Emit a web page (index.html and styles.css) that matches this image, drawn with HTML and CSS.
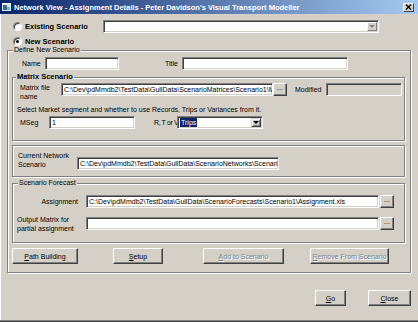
FILE: index.html
```html
<!DOCTYPE html>
<html>
<head>
  <title>Network View - Assignment Details</title>
  <link rel="stylesheet" href="styles.css">
</head>
<body>
  <div class="window">
    <div class="titlebar">
      <svg class="app-icon" width="9" height="8" viewBox="0 0 9 8">
        <rect x="0" y="0" width="9" height="8" fill="#dfe8ef"/>
        <rect x="1" y="2" width="4" height="5" fill="#2f6f8f"/>
        <rect x="5" y="4" width="3" height="3" fill="#7fb0c8"/>
        <rect x="0" y="0" width="9" height="1" fill="#ffffff"/>
      </svg>
      <span class="title">Network View - Assignment Details - Peter Davidson's Visual Transport Modeller</span>
      <span class="close-btn">
        <svg width="7" height="6" viewBox="0 0 7 6">
          <path d="M1 0.5 L6 5.5 M6 0.5 L1 5.5" stroke="#000" stroke-width="1.3"/>
        </svg>
      </span>
    </div>

    <div class="scenario-row">
      <label class="radio-label"><span class="radio"></span>Existing Scenario</label>
      <div class="combo disabled">
        <span class="combo-btn flat"><span class="arrow grey"></span></span>
      </div>
    </div>
    <div class="scenario-row new-row">
      <label class="radio-label"><span class="radio checked"></span>New Scenario</label>
    </div>

    <div class="group define-group">
      <div class="legend">Define New Scenario</div>

      <div class="name-row">
        <span class="lbl name-lbl">Name</span>
        <div class="textbox name-box"></div>
        <span class="lbl title-lbl">Title</span>
        <div class="textbox title-box"></div>
      </div>

      <div class="group inner-group matrix-group">
        <div class="legend bold">Matrix Scenario</div>
        <div class="file-row">
          <span class="lbl two-line file-lbl">Matrix file<br>name</span>
          <div class="textbox file-box">C:\Dev\pdMmdb2\TestData\GullData\ScenarioMatrices\Scenario1\Matrix.mat</div>
          <span class="btn dots">...</span>
          <span class="lbl modified-lbl">Modified</span>
          <div class="textbox readonly modified-box"></div>
        </div>
        <div class="hint">Select Market segment and whether to use Records, Trips or Variances from it.</div>
        <div class="mseg-row">
          <span class="lbl mseg-lbl">MSeg</span>
          <div class="textbox mseg-box">1</div>
          <span class="lbl rtv-lbl">R, T or V</span>
          <div class="combo rtv-combo">
            <span class="selected-text">Trips</span>
            <span class="combo-btn"><span class="arrow"></span></span>
          </div>
        </div>
      </div>

      <div class="group inner-group network-group">
        <span class="lbl two-line network-lbl">Current Network<br>Scenario</span>
        <div class="textbox network-box">C:\Dev\pdMmdb2\TestData\GullData\ScenarioNetworks\Scenario1</div>
      </div>

      <div class="group inner-group forecast-group">
        <div class="legend">Scenario Forecast</div>
        <div class="forecast-row assign-row">
          <span class="lbl forecast-lbl right">Assignment</span>
          <div class="textbox forecast-box">C:\Dev\pdMmdb2\TestData\GullData\ScenarioForecasts\Scenario1\Assignment.xls</div>
          <span class="btn dots small-dots">...</span>
        </div>
        <div class="forecast-row output-row">
          <span class="lbl two-line forecast-lbl">Output Matrix for<br>partial assignment</span>
          <div class="textbox forecast-box"></div>
          <span class="btn dots small-dots">...</span>
        </div>
      </div>

      <div class="action-row">
        <span class="btn path-btn"><u>P</u>ath Building</span>
        <span class="btn setup-btn"><u>S</u>etup</span>
        <span class="btn disabled add-btn"><u>A</u>dd to Scenario</span>
        <span class="btn disabled remove-btn"><u>R</u>emove From Scenario</span>
      </div>
    </div>

    <div class="footer">
      <span class="btn go-btn"><u>G</u>o</span>
      <span class="btn close-dlg-btn"><u>C</u>lose</span>
    </div>
  </div>
</body>
</html>
```

FILE: styles.css
```css
:root {
  --face: #d4d0c8;
  --shadow: #808080;
  --dark: #404040;
  --light: #ffffff;
  --title-dark: #0a246a;
  --title-light: #a6caf0;
}

* {
  box-sizing: border-box;
}

body {
  margin: 0;
  font-family: "Liberation Sans", Arial, sans-serif;
  font-size: 7px;
  color: #000;
}

.window {
  width: 418px;
  height: 322px;
  background-color: var(--face);
  overflow: hidden;
  box-shadow: inset 0 -1px 0 var(--dark), inset 0 -2px 0 var(--shadow), inset 1px 0 0 var(--light);
}

/* title bar */
.titlebar {
  height: 14px;
  display: flex;
  align-items: center;
  padding-left: 2px;
  background: linear-gradient(to right, var(--title-dark), var(--title-light));
}

.app-icon {
  flex: none;
}

.title {
  margin-left: 3px;
  color: #fff;
  font-weight: bold;
  font-size: 7.5px;
  white-space: nowrap;
}

.close-btn {
  margin-left: auto;
  margin-right: 4px;
  width: 11px;
  height: 9px;
  display: flex;
  align-items: center;
  justify-content: center;
  background-color: var(--face);
  border: 1px solid;
  border-color: var(--light) var(--dark) var(--dark) var(--light);
}

/* scenario choice */
.scenario-row {
  display: flex;
  align-items: center;
  height: 14px;
  margin-top: 5px;
  padding-left: 13px;
}

.new-row {
  height: 10px;
  margin-top: 3px;
}

.radio-label {
  display: flex;
  align-items: center;
  width: 90px;
  font-weight: bold;
  font-size: 7.5px;
  white-space: nowrap;
}

.radio {
  width: 9px;
  height: 9px;
  margin-right: 3px;
  border-radius: 50%;
  background-color: #fff;
  border: 1px solid;
  border-color: var(--shadow) var(--light) var(--light) var(--shadow);
  box-shadow: inset 1px 1px 0 var(--dark);
  display: flex;
  align-items: center;
  justify-content: center;
}

.radio.checked::after {
  content: "";
  width: 3px;
  height: 3px;
  border-radius: 50%;
  background-color: #000;
}

/* controls */
.textbox,
.combo {
  flex: none;
  height: 13px;
  background-color: #fff;
  border: 1px solid;
  border-color: var(--shadow) var(--light) var(--light) var(--shadow);
  box-shadow: inset 1px 1px 0 var(--dark), inset -1px -1px 0 var(--face);
  padding: 0 2px;
  line-height: 11px;
  white-space: nowrap;
  overflow: hidden;
}

.textbox.readonly {
  background-color: var(--face);
}

.combo {
  display: flex;
  align-items: center;
  justify-content: space-between;
  padding: 1px;
}

.scenario-row .combo {
  width: 276px;
}

.combo-btn {
  width: 10px;
  height: 9px;
  margin-left: auto;
  display: flex;
  align-items: center;
  justify-content: center;
  background-color: var(--face);
  border: 1px solid;
  border-color: var(--face) var(--dark) var(--dark) var(--face);
  box-shadow: inset 1px 1px 0 var(--light), inset -1px -1px 0 var(--shadow);
}

.combo-btn.flat {
  border-color: var(--light) var(--shadow) var(--shadow) var(--light);
  box-shadow: none;
}

.arrow {
  width: 0;
  height: 0;
  border-left: 3px solid transparent;
  border-right: 3px solid transparent;
  border-top: 3px solid #000;
}

.arrow.grey {
  border-top-color: var(--shadow);
}

.btn {
  flex: none;
  display: flex;
  align-items: center;
  justify-content: center;
  height: 16px;
  background-color: var(--face);
  border: 1px solid;
  border-color: var(--light) var(--dark) var(--dark) var(--light);
  box-shadow: inset -1px -1px 0 var(--shadow);
  white-space: nowrap;
}

.btn.disabled {
  color: var(--shadow);
  text-shadow: 1px 1px 0 var(--light);
}

.btn.dots {
  width: 14px;
  height: 13px;
  line-height: 8px;
  align-items: flex-end;
  padding-bottom: 3px;
}

/* group boxes */
.group {
  border: 1px solid var(--shadow);
  box-shadow: 1px 1px 0 var(--light), inset 1px 1px 0 var(--light);
}

.define-group {
  margin: 4px 0 0 7px;
  width: 404px;
  height: 223px;
}

.inner-group {
  margin-left: 4px;
  width: 393px;
}

.legend {
  width: fit-content;
  height: 10px;
  line-height: 10px;
  margin: -6px 0 0 5px;
  padding: 0 1px;
  background-color: var(--face);
}

.legend.bold {
  margin-left: 3px;
  font-weight: bold;
  font-size: 7.5px;
}

.lbl {
  flex: none;
  white-space: nowrap;
}

.two-line {
  line-height: 9px;
  align-self: flex-start;
}

.right {
  text-align: right;
  padding-right: 4px;
}

.name-row {
  display: flex;
  align-items: center;
  height: 13px;
  margin-top: 2px;
  padding-left: 14px;
}

.name-lbl {
  width: 23px;
}

.name-box {
  width: 74px;
}

.title-lbl {
  margin-left: 46px;
  width: 17px;
}

.title-box {
  width: 166px;
}

/* matrix scenario */
.matrix-group {
  margin-top: 7px;
  height: 64px;
}

.file-row {
  display: flex;
  align-items: center;
  height: 13px;
  margin-top: 1px;
  padding-left: 7px;
}

.file-lbl {
  width: 41px;
}

.file-box {
  width: 212px;
}

.modified-lbl {
  margin-left: 8px;
  width: 31px;
}

.modified-box {
  width: 76px;
}

.hint {
  margin-top: 9px;
  height: 10px;
  line-height: 10px;
  padding-left: 4px;
  white-space: nowrap;
}

.mseg-row {
  display: flex;
  align-items: center;
  height: 13px;
  margin-top: 1px;
  padding-left: 7px;
}

.mseg-lbl {
  width: 29px;
}

.mseg-box {
  width: 86px;
}

.rtv-lbl {
  margin-left: 19px;
  width: 23px;
  letter-spacing: -0.4px;
}

.rtv-combo {
  width: 86px;
}

.selected-text {
  margin-left: 1px;
  padding: 0 1px;
  line-height: 9px;
  background-color: var(--title-dark);
  color: #fff;
}

/* current network */
.network-group {
  margin-top: 4px;
  height: 32px;
  display: flex;
  padding: 5px 0 0 5px;
}

.network-lbl {
  width: 59px;
}

.network-box {
  width: 202px;
  margin-top: 6px;
}

/* forecast */
.forecast-group {
  margin-top: 6px;
  height: 60px;
}

.forecast-row {
  display: flex;
  align-items: center;
  height: 13px;
}

.assign-row {
  margin-top: 7px;
}

.output-row {
  margin-top: 9px;
  padding-left: 4px;
}

.forecast-lbl {
  width: 69px;
}

.output-row .forecast-lbl {
  width: 65px;
  align-self: center;
}

.forecast-box {
  width: 293px;
  margin-left: 4px;
}

.small-dots {
  width: 13px;
  margin-left: 1px;
}

/* action buttons */
.action-row {
  display: flex;
  margin-top: 5px;
  padding-left: 4px;
}

.path-btn {
  width: 66px;
}

.setup-btn {
  width: 50px;
  margin-left: 35px;
}

.add-btn {
  width: 81px;
  margin-left: 40px;
}

.remove-btn {
  width: 79px;
  margin-left: 26px;
}

.footer {
  display: flex;
  margin-top: 17px;
  padding-left: 315px;
}

.go-btn {
  width: 31px;
}

.close-dlg-btn {
  width: 43px;
  margin-left: 22px;
}
```
